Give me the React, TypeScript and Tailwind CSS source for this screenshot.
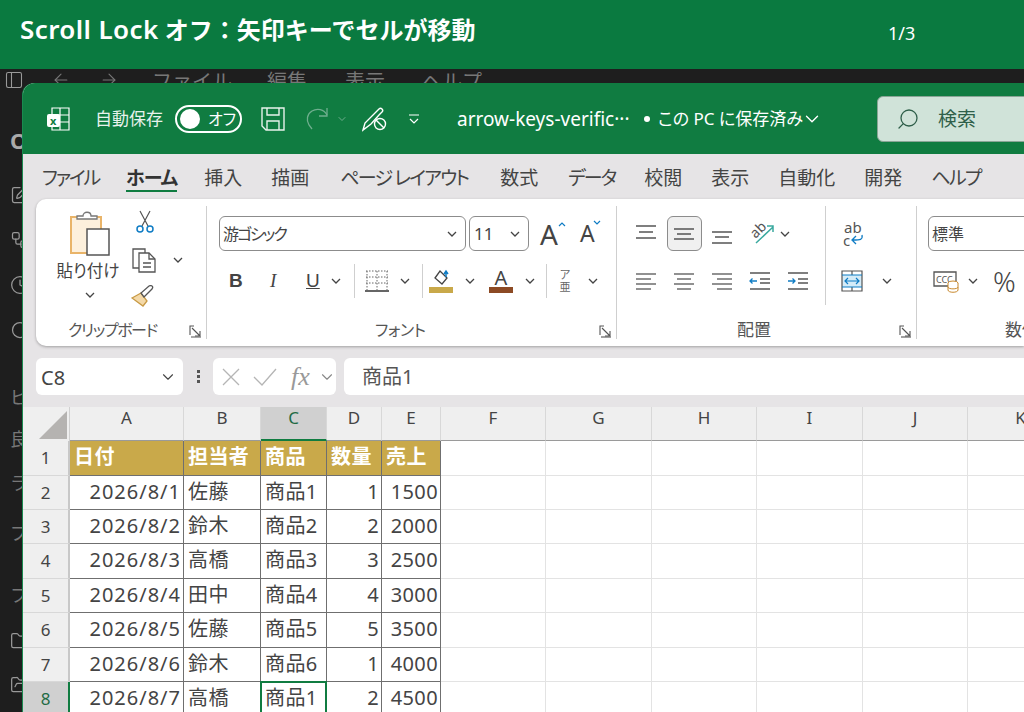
import {
  ArrowLeft,
  ArrowRight,
  ChevronDown,
  Clock,
  Folder,
  FolderOpen,
  PanelLeft,
  RotateCw,
  Search,
  SquarePen,
  Workflow,
} from 'lucide-react';
import type { ReactNode } from 'react';

const FONT = { fontFamily: '"Noto Sans", "Noto Sans CJK JP", sans-serif' };

const tabs = [
  { name: 'ファイル', cls: 'tracking-[-2.2px]' },
  { name: 'ホーム', cls: 'tracking-[-1px] font-bold text-[#333] ml-[-2px]' },
  { name: '挿入', cls: 'ml-[-2px]' },
  { name: '描画', cls: '' },
  { name: 'ページ レイアウト', cls: 'tracking-[-1.8px] ml-[2px]' },
  { name: '数式', cls: 'ml-[3px]' },
  { name: 'データ', cls: 'tracking-[-2px] ml-[1px]' },
  { name: '校閲', cls: '' },
  { name: '表示', cls: '' },
  { name: '自動化', cls: '' },
  { name: '開発', cls: '' },
  { name: 'ヘルプ', cls: 'tracking-[-1.7px]' },
];

const colHeads = [
  { name: 'A', w: 'w-[114px]' },
  { name: 'B', w: 'w-[77px]' },
  { name: 'C', w: 'w-[66px]' },
  { name: 'D', w: 'w-[55px]' },
  { name: 'E', w: 'w-[59px]' },
  { name: 'F', w: 'w-[105px]' },
  { name: 'G', w: 'w-[106px]' },
  { name: 'H', w: 'w-[105px]' },
  { name: 'I', w: 'w-[106px]' },
  { name: 'J', w: 'w-[105px]' },
  { name: 'K', w: 'w-[106px]' },
];

const rows = [
  { h: 'h-[35px]', n: 1, cells: ['日付', '担当者', '商品', '数量', '売上'] },
  { h: 'h-[34px]', n: 2, cells: ['2026/8/1', '佐藤', '商品1', '1', '1500'] },
  { h: 'h-[34px]', n: 3, cells: ['2026/8/2', '鈴木', '商品2', '2', '2000'] },
  { h: 'h-[35px]', n: 4, cells: ['2026/8/3', '高橋', '商品3', '3', '2500'] },
  { h: 'h-[34px]', n: 5, cells: ['2026/8/4', '田中', '商品4', '4', '3000'] },
  { h: 'h-[35px]', n: 6, cells: ['2026/8/5', '佐藤', '商品5', '5', '3500'] },
  { h: 'h-[34px]', n: 7, cells: ['2026/8/6', '鈴木', '商品6', '1', '4000'] },
  { h: 'h-[34px]', n: 8, cells: ['2026/8/7', '高橋', '商品1', '2', '4500'] },
];

function Chev({ className = '' }: { className?: string }) {
  return (
    <svg width="10" height="6" viewBox="0 0 10 6" fill="none" stroke="#444" strokeWidth="1.3" className={className}>
      <path d="M1 1l4 4 4-4" />
    </svg>
  );
}

function Launcher() {
  return (
    <svg width="13" height="13" viewBox="0 0 13 13" fill="none" stroke="#555" strokeWidth="1.1">
      <path d="M5 1H1v9" />
      <path d="M3 3l8 8M11 6v5H6" />
      <path d="M2 12h10" />
    </svg>
  );
}

function Lines({ widths, color = '#555' }: { widths: number[][]; color?: string }) {
  return (
    <svg width="22" height="22" viewBox="0 0 22 22" stroke={color} strokeWidth="1.3" fill="none">
      {widths.map(([y, a, b]) => (
        <path key={y} d={`M${a} ${y}H${b}`} />
      ))}
    </svg>
  );
}

function Indent({ right }: { right?: boolean }) {
  return (
    <svg width="22" height="22" viewBox="0 0 22 22" fill="none" strokeWidth="1.3">
      <path d="M1 3h20M1 19h20M11 9h10M11 13h10" stroke="#555" />
      <path d={right ? 'M1 11h7M5.5 8.5L8 11l-2.5 2.500' : 'M8 11H1M3.500 8.5L1 11l2.500 2.500'} stroke="#0f7cc4" />
    </svg>
  );
}

function Group({ className, label, labelClass, children }: { className: string; label: string; labelClass: string; children: ReactNode }) {
  return (
    <div className={`flex flex-col shrink-0 h-full border-r border-[#cfcfcf] ${className}`}>
      <div className="h-[111px] shrink-0 relative">{children}</div>
      <div className={`h-[24px] shrink-0 mt-[1px] flex items-center justify-between text-[16px] text-[#555] ${labelClass}`}>
        <span>{label}</span>
        <span className="mt-[2px]">
          <Launcher />
        </span>
      </div>
    </div>
  );
}

function Select({ className, text }: { className: string; text: string }) {
  return (
    <div className={`h-[35px] shrink-0 rounded-[6px] border border-[#8c8c8c] flex items-center justify-between pl-[3px] pr-[8px] text-[16px] text-[#444] ${className}`}>
      <span>{text}</span>
      <Chev />
    </div>
  );
}

function Divider() {
  return <div className="w-px h-[34px] bg-[#cfcfcf] shrink-0" />;
}

function ClipboardGroup() {
  return (
    <Group className="w-[171px]" label="クリップボード" labelClass="pl-[32px] pr-[4px] tracking-[-1.400px]">
      <div className="flex h-full">
        <div className="w-[108px] flex flex-col items-center pt-[5px]">
          <svg width="42" height="46" viewBox="0 0 42 46" fill="none">
            <path d="M2 6h30v36H2z" fill="#fdf0dc" stroke="#e9b469" strokeWidth="2" />
            <path d="M8 8V5h6c0-5 8-5 8 0h6v3z" fill="#fff" stroke="#777" strokeWidth="1.3" />
            <path d="M18 18h22v26H18z" fill="#fff" stroke="#555" strokeWidth="1.500" />
          </svg>
          <span className="text-[16.500px] text-[#444] mt-[2px] leading-[24px] -ml-[4px]">貼り付け</span>
          <Chev className="mt-[9px]" />
        </div>
        <div className="flex flex-col items-start pt-[4px]">
          <svg width="20" height="24" viewBox="0 0 20 24" fill="none" className="ml-[-9px]">
            <path d="M5 1l8 15M15 1L7 16" stroke="#555" strokeWidth="1.200" />
            <circle cx="5" cy="19" r="3" stroke="#0f7cc4" strokeWidth="1.500" />
            <circle cx="15" cy="19" r="3" stroke="#0f7cc4" strokeWidth="1.500" />
          </svg>
          <div className="flex items-center mt-[13px] ml-[-13px]">
            <svg width="26" height="26" viewBox="0 0 26 26" fill="none" stroke="#555" strokeWidth="1.300">
              <path d="M8 21H2V2h12v4" />
              <path d="M8 6h10l6 6v13H8z" fill="#fff" />
              <path d="M18 6v6h6M12 16h8M12 20h8" />
            </svg>
            <Chev className="ml-[16px]" />
          </div>
          <svg width="24" height="22" viewBox="0 0 24 22" fill="none" className="mt-[12px] ml-[-13px]">
            <path d="M1 13l9-5 6 8-4 5z" fill="#f4d9a8" stroke="#c89a45" strokeWidth="1.300" />
            <path d="M10 8l3 4 8-8c2-3-1-4-3-3z" fill="#fff" stroke="#555" strokeWidth="1.300" />
          </svg>
        </div>
      </div>
    </Group>
  );
}

function FontGroup() {
  return (
    <Group className="w-[410px]" label="フォント" labelClass="pl-[168px] pr-[4px] tracking-[-0.500px]">
      <div className="flex flex-col gap-[12px] pt-[10px] pl-[12px]">
        <div className="flex items-center">
          <Select className="w-[247px] pl-[2px] tracking-[-2px]" text="游ゴシック" />
          <Select className="w-[60px] ml-[3px] pl-[4px] text-[17px]" text="11" />
          <div className="ml-[11px] w-[21px] flex items-start relative">
            <span className="text-[28px] leading-none text-[#444]">A</span>
            <svg width="8" height="5" viewBox="0 0 8 5" fill="none" stroke="#0f7cc4" strokeWidth="1.200" className="absolute left-[18px] top-[2px]">
              <path d="M1 4l3-3 3 3" />
            </svg>
          </div>
          <div className="ml-[19px] w-[20px] flex items-end relative">
            <span className="text-[23px] leading-none text-[#444]">A</span>
            <svg width="8" height="5" viewBox="0 0 8 5" fill="none" stroke="#0f7cc4" strokeWidth="1.200" className="absolute left-[13px] top-[-2px]">
              <path d="M1 1l3 3 3-3" />
            </svg>
          </div>
        </div>
        <div className="flex items-center h-[36px] text-[#444]">
          <span className="w-[11px] ml-[10px] text-[19px] font-bold" style={{ fontFamily: '"Liberation Sans", sans-serif' }}>B</span>
          <span className="w-[10px] ml-[30px] text-[19px] italic" style={{ fontFamily: '"Liberation Serif", serif' }}>I</span>
          <span className="w-[14px] ml-[26px] text-[19px] underline" style={{ fontFamily: '"Liberation Sans", sans-serif' }}>U</span>
          <Chev className="ml-[11px]" />
          <div className="ml-[13px]"><Divider /></div>
          <svg width="24" height="24" viewBox="0 0 24 24" fill="none" className="ml-[10px]">
            <path d="M1 2h22M1 8h22M1 14h22M2 2v19M12 2v19M22 2v19" stroke="#666" strokeDasharray="1.500 1.500" />
            <path d="M0 22h24" stroke="#666" strokeWidth="2" />
          </svg>
          <Chev className="ml-[11px]" />
          <div className="ml-[12px]"><Divider /></div>
          <div className="ml-[6px] w-[24px] flex flex-col items-center">
            <svg width="20" height="18" viewBox="0 0 20 18" fill="none">
              <path d="M9 2l7 7-5 6-7-6z" stroke="#444" strokeWidth="1.300" />
              <path d="M15 8V3M13 5l2-3 2 3" stroke="#0f7cc4" strokeWidth="1.500" />
            </svg>
            <div className="w-[24px] h-[6px] bg-[#c9a94a]" />
          </div>
          <Chev className="ml-[12px]" />
          <div className="ml-[14px] w-[24px] flex flex-col items-center">
            <span className="text-[20px] leading-[18px] text-[#444]">A</span>
            <div className="w-[24px] h-[6px] bg-[#8c4a24]" />
          </div>
          <Chev className="ml-[12px]" />
          <div className="ml-[11px]"><Divider /></div>
          <div className="ml-[11px] w-[14px] flex flex-col items-center text-[#666] text-[11px] leading-[12px]">
            <span>ア</span>
            <span>亜</span>
          </div>
          <Chev className="ml-[16px]" />
        </div>
      </div>
    </Group>
  );
}

function AlignGroup() {
  return (
    <Group className="w-[300px]" label="配置" labelClass="pl-[120px] pr-[4px] text-[17px]">
      <div className="flex h-full">
        <div className="w-[209px] flex flex-col gap-[12px] pt-[10px] pl-[18px] border-r border-[#cfcfcf] h-[99px] mt-[0px]">
          <div className="flex items-center h-[35px] gap-[16px]">
            <Lines widths={[[3, 1, 21], [9, 4, 18], [15, 1, 21]]} />
            <div className="w-[35px] h-[35px] -mx-[6.500px] bg-[#f0f0f0] border border-[#8c8c8c] rounded-[6px] flex items-center justify-center">
              <Lines widths={[[6, 1, 21], [11, 4, 18], [16, 1, 21]]} />
            </div>
            <Lines widths={[[9, 1, 21], [14, 4, 18], [20, 1, 21]]} />
            <svg width="26" height="24" viewBox="0 0 26 24" fill="none" className="ml-[1px]">
              <path d="M6 21L23 5M17 4h6v6" stroke="#3aa99f" strokeWidth="1.500" />
              <text x="1" y="14" fontSize="14" fill="#555" transform="rotate(-45 7 10)">ab</text>
            </svg>
            <Chev className="-ml-[12px]" />
          </div>
          <div className="flex items-center h-[36px] gap-[16px]">
            <Lines widths={[[4, 1, 21], [9, 1, 16], [14, 1, 21], [19, 1, 16]]} />
            <Lines widths={[[4, 1, 21], [9, 4, 18], [14, 1, 21], [19, 4, 18]]} />
            <Lines widths={[[4, 1, 21], [9, 6, 21], [14, 1, 21], [19, 6, 21]]} />
            <Indent />
            <Indent right />
          </div>
        </div>
        <div className="flex flex-col pt-[10px] pl-[15px]">
          <div className="h-[35px] flex items-center pl-[2px]">
            <div className="w-[22px] text-[#555] text-[15px] leading-[13px] relative">
              <div className="pl-[1px]">ab</div>
              <div className="flex items-center">
                c
                <svg width="14" height="12" viewBox="0 0 14 12" fill="none" stroke="#0f7cc4" strokeWidth="1.300">
                  <path d="M12 1c1 5-2 5-9 5M6 2L2 6l4 4" />
                </svg>
              </div>
            </div>
          </div>
          <div className="h-[36px] mt-[12px] flex items-center">
            <svg width="22" height="22" viewBox="0 0 22 22" fill="none">
              <rect x="1" y="5" width="20" height="12" fill="#d5ecf8" />
              <path d="M1 1h20v20H1zM11 1v4M11 17v4" stroke="#555" strokeWidth="1.200" />
              <path d="M1 5h20M1 17h20" stroke="#0f7cc4" strokeWidth="1.200" />
              <path d="M4 11h14M7 8l-3 3 3 3M15 8l3 3-3 3" stroke="#0f7cc4" strokeWidth="1.200" />
            </svg>
            <Chev className="ml-[19px]" />
          </div>
        </div>
      </div>
    </Group>
  );
}

function NumberGroup() {
  return (
    <div className="flex flex-col shrink-0 h-full w-[200px]">
      <div className="h-[111px] shrink-0 pl-[11px] pt-[10px] flex flex-col gap-[12px]">
        <Select className="w-[190px]" text="標準" />
        <div className="flex items-center h-[36px]">
          <svg width="26" height="24" viewBox="0 0 26 24" fill="none" className="ml-[5px]">
            <path d="M1 3h22v14H1z" stroke="#555" strokeWidth="1.300" />
            <text x="3" y="14" fontSize="9" fill="#555">CCC</text>
            <ellipse cx="20" cy="14" rx="5" ry="2" fill="#fff" stroke="#c8882c" />
            <path d="M15 14v7c0 3 10 3 10 0v-7M15 18c0 2.500 10 2.500 10 0" fill="#fff" stroke="#c8882c" />
          </svg>
          <Chev className="ml-[9px]" />
          <span className="ml-[15px] text-[28px] font-light text-[#444] leading-none">%</span>
        </div>
      </div>
      <div className="h-[24px] shrink-0 mt-[1px] text-[17px] text-[#555] pl-[88px] flex items-center whitespace-nowrap">
        <span>数値</span>
      </div>
    </div>
  );
}

function Cell({ row, col, text }: { row: number; col: number; text: string }) {
  const isHead = row === 1;
  const isRight = !isHead && (col === 0 || col === 3 || col === 4);
  const isSelected = row === 8 && col === 2;
  return (
    <div
      className={`${colHeads[col].w} shrink-0 h-full flex items-center border-r border-b border-[#6f6f6f] text-[20px] pb-[2px] whitespace-nowrap relative ${
        isRight ? 'justify-end pr-[2px]' : 'pl-[4px]'
      } ${isHead ? 'bg-[#c9a94a] text-white font-bold' : 'bg-white text-[#444]'} ${
        col === 0 && !isHead ? 'tracking-[1px]' : 'tracking-[0.4px]'
      }`}
    >
      {text}
      {isSelected && <div className="absolute -left-px -top-px -right-px h-[40px] border-2 border-[#107c41]" />}
    </div>
  );
}

function SheetGrid() {
  return (
    <div className="flex flex-col bg-white">
      <div className="flex h-[34px] bg-[#efefef] shrink-0">
        <div className="w-[47px] shrink-0 h-full flex items-end justify-end border-r border-[#d0d0d0] pr-[2px] pb-[2px]">
          <svg width="28" height="28" viewBox="0 0 28 28">
            <path d="M28 0v28H0z" fill="#b5b3b1" />
          </svg>
        </div>
        {colHeads.map((c) => (
          <div
            key={c.name}
            className={`${c.w} shrink-0 h-full flex items-center justify-center text-[17px] pb-[11px] border-r border-[#d8d8d8] border-b ${
              c.name === 'C' ? 'bg-[#d0d0d0] text-[#1f6b45] border-b-2 border-b-[#107c41]' : 'text-[#444] border-b-[#9a9a9a]'
            }`}
          >
            {c.name}
          </div>
        ))}
      </div>
      {rows.map((r) => (
        <div key={r.n} className={`flex ${r.h} shrink-0`}>
          <div
            className={`w-[47px] shrink-0 h-full flex items-center justify-center text-[17px] border-r-2 border-b ${
              r.n === 8 ? 'bg-[#d0d0d0] text-[#1f6b45] border-r-[#107c41] border-b-[#d8d8d8]' : 'bg-[#efefef] text-[#444] border-r-[#c8c8c8] border-b-[#d8d8d8]'
            }`}
          >
            {r.n}
          </div>
          {r.cells.map((t, i) => (
            <Cell key={i} row={r.n} col={i} text={t} />
          ))}
          {colHeads.slice(5).map((c) => (
            <div key={c.name} className={`${c.w} shrink-0 h-full border-r border-b border-[#e3e3e3]`} />
          ))}
        </div>
      ))}
    </div>
  );
}

function Sidebar() {
  return (
    <div className="w-[23px] shrink-0 overflow-hidden flex flex-col text-[#999]">
      <PanelLeft className="w-[20px] h-[20px] ml-[4px] mt-[1px] shrink-0" strokeWidth={1.300} />
      <div className="pl-[10px] flex flex-col items-start">
        <span className="text-[22px] font-bold leading-[30px] mt-[35px] text-[#aaa]">O</span>
        <SquarePen className="w-[20px] h-[20px] mt-[30px] shrink-0" strokeWidth={1.500} />
        <Workflow className="w-[20px] h-[20px] mt-[25px] shrink-0" strokeWidth={1.500} />
        <Clock className="w-[20px] h-[20px] mt-[25px] shrink-0" strokeWidth={1.500} />
        <RotateCw className="w-[20px] h-[20px] mt-[25px] shrink-0" strokeWidth={1.500} />
        <span className="text-[18px] text-[#777] leading-[26px] mt-[44px]">ビ</span>
        <span className="text-[18px] text-[#777] leading-[26px] mt-[16px]">良</span>
        <span className="text-[18px] text-[#777] leading-[26px] mt-[18px]">ラ</span>
        <span className="text-[18px] text-[#777] leading-[26px] mt-[24px]">プ</span>
        <span className="text-[18px] text-[#777] leading-[26px] mt-[36px]">フ</span>
        <Folder className="w-[20px] h-[20px] mt-[23px] shrink-0" strokeWidth={1.500} />
        <FolderOpen className="w-[20px] h-[20px] mt-[24px] shrink-0" strokeWidth={1.500} />
      </div>
    </div>
  );
}

export default function App() {
  return (
    <div className="w-[1024px] h-[712px] overflow-hidden flex flex-col bg-[#1e1e1e]" style={FONT}>
      {/* Slide banner */}
      <div className="h-[69px] shrink-0 bg-[#0a7a40] flex justify-between text-white">
        <div className="pl-[20px] pt-[11px] text-[24px] font-semibold leading-[36px] whitespace-nowrap">
          <span className="text-[26px] tracking-[0.4px]">Scroll Lock</span> オフ：矢印キーでセルが移動
        </div>
        <div className="w-[136px] pt-[20px] text-[18px] leading-[26px]">1/3</div>
      </div>

      <div className="flex flex-1 min-h-0">
        <Sidebar />
        <div className="flex-1 min-w-0 flex flex-col">
          {/* Menu of the window behind, cut off by Excel */}
          <div className="h-[14px] shrink-0 overflow-hidden flex items-start text-[#777] text-[20px] leading-[26px] pl-[28px]">
            <ArrowLeft className="w-[20px] h-[20px] mt-[1px] shrink-0" strokeWidth={1.300} />
            <ArrowRight className="w-[20px] h-[20px] mt-[1px] ml-[28px] shrink-0" strokeWidth={1.300} />
            <span className="ml-[33px]">ファイル</span>
            <span className="ml-[35px]">編集</span>
            <span className="ml-[38px]">表示</span>
            <span className="ml-[37px]">ヘルプ</span>
          </div>

          {/* Excel window */}
          <div className="flex-1 min-h-0 flex flex-col bg-[#e6e4e6] rounded-tl-[12px] overflow-hidden shadow-[-1px_0_0_#1a8a50] [font-feature-settings:'palt']">
            <div className="h-[71px] shrink-0 bg-[#107c41] flex items-center text-white pl-[24px] pt-[1px]">
              <svg width="24" height="26" viewBox="0 0 24 26" fill="none" className="shrink-0">
                <path d="M5 2h17v22H5zM13 2v22M5 9h17M5 16h17" stroke="#fff" strokeWidth="1.200" />
                <rect x="0" y="8" width="13" height="13" rx="2" fill="#fff" />
                <text x="3" y="18.500" fontSize="11" fontWeight="700" fill="#107c41">x</text>
              </svg>
              <span className="ml-[24px] text-[17px] text-[#e8f2ec] shrink-0 w-[69px] whitespace-nowrap">自動保存</span>
              <div className="ml-[11px] w-[67px] h-[28px] shrink-0 rounded-full border-2 border-white flex items-center pl-[3px] gap-[8px]">
                <div className="w-[20px] h-[20px] rounded-full bg-white" />
                <span className="text-[16px] leading-none">オフ</span>
              </div>
              <svg width="24" height="24" viewBox="0 0 24 24" fill="none" stroke="#e8f2ec" strokeWidth="1.400" className="ml-[19px] shrink-0">
                <path d="M1 1h22v22H5l-4-4z" />
                <path d="M6 1v7h12V1M6 23v-9h12v9" />
              </svg>
              <svg width="24" height="24" viewBox="0 0 24 24" fill="none" stroke="#6fae8e" strokeWidth="1.300" className="ml-[20px] shrink-0">
                <path d="M22 8c-3-6-10-7-15-4S1 13 4 18l3 4" />
                <path d="M22 1v8h-8" />
              </svg>
              <ChevronDown className="w-[12px] h-[12px] ml-[7px] text-[#6fae8e] shrink-0" />
              <svg width="26" height="26" viewBox="0 0 26 26" fill="none" stroke="#fff" strokeWidth="1.400" className="ml-[14px] shrink-0">
                <path d="M1 24l2-7L17 3c2-2 5 1 3 3l-3 3-8 9z" />
                <circle cx="18" cy="18" r="5.500" />
                <path d="M14 14l8 8" />
              </svg>
              <svg width="12" height="10" viewBox="0 0 12 10" fill="none" stroke="#fff" strokeWidth="1.200" className="ml-[20px] shrink-0">
                <path d="M1 1h10M2 5l4 4 4-4" />
              </svg>
              <span className="ml-[37px] w-[174px] text-[19px] shrink-0 whitespace-nowrap">arrow-keys-verific···</span>
              <span className="ml-[13px] w-[6px] h-[6px] rounded-full bg-white shrink-0" />
              <span className="ml-[8px] w-[140px] text-[17px] shrink-0 whitespace-nowrap">この PC に保存済み</span>
              <ChevronDown className="w-[22px] h-[22px] ml-[3px] shrink-0" strokeWidth={1.500} />
              <div className="ml-[54px] w-[160px] h-[46px] shrink-0 bg-[#d0e3d9] border border-[#8aa596] rounded-[6px] flex items-center text-[#2f5f4a] pl-[18px]">
                <Search className="w-[24px] h-[24px] -scale-x-100" strokeWidth={1.300} />
                <span className="ml-[18px] text-[19px]">検索</span>
              </div>
            </div>

            <div className="h-[43px] shrink-0 flex gap-[29px] pl-[19px] pt-[5px] text-[19px] text-[#444] whitespace-nowrap">
              {tabs.map((t) => (
                <div key={t.name} className={`relative h-full flex items-center ${t.cls}`}>
                  {t.name}
                  {t.name === 'ホーム' && <div className="absolute left-0 right-0 bottom-[5px] h-[2px] bg-[#107c41]" />}
                </div>
              ))}
            </div>

            <div className="ml-[13px] mt-[2px] h-[147px] shrink-0 bg-white rounded-l-[10px] shadow-[0_1px_3px_rgba(0,0,0,0.3)] flex py-[7px] overflow-hidden">
              <ClipboardGroup />
              <FontGroup />
              <AlignGroup />
              <NumberGroup />
            </div>

            <div className="mt-[12px] h-[37px] shrink-0 pl-[13px] flex items-stretch">
              <div className="w-[147px] bg-white rounded-[6px] flex items-center justify-between pl-[5px] pr-[6px] text-[20px] text-[#444]">
                <span className="mt-[2px]">C8</span>
                <ChevronDown className="w-[18px] h-[18px]" strokeWidth={1.500} />
              </div>
              <div className="w-[30px] flex flex-col items-center justify-center gap-[2px]">
                <div className="w-[3px] h-[3px] bg-[#555]" />
                <div className="w-[3px] h-[3px] bg-[#555]" />
                <div className="w-[3px] h-[3px] bg-[#555]" />
              </div>
              <div className="w-[123px] bg-white rounded-[6px] flex items-center text-[#aaa] pl-[8px]">
                <svg width="20" height="20" viewBox="0 0 20 20" fill="none" stroke="#b5b5b5" strokeWidth="1.300" className="shrink-0">
                  <path d="M2 2l16 16M18 2L2 18" />
                </svg>
                <svg width="24" height="20" viewBox="0 0 24 20" fill="none" stroke="#b5b5b5" strokeWidth="1.300" className="ml-[12px] shrink-0">
                  <path d="M1 10l8 8L23 2" />
                </svg>
                <span className="ml-[14px] text-[26px] italic leading-none text-[#999] w-[20px]" style={{ fontFamily: '"Liberation Serif", serif' }}>fx</span>
                <ChevronDown className="w-[18px] h-[18px] ml-[7px] text-[#888] shrink-0" strokeWidth={1.500} />
              </div>
              <div className="flex-1 ml-[8px] bg-white rounded-l-[6px] flex items-center pl-[18px] text-[20px] text-[#555]">商品1</div>
            </div>

            <div className="mt-[12px] flex-1 min-h-0 overflow-hidden">
              <SheetGrid />
            </div>
          </div>
        </div>
      </div>
    </div>
  );
}
